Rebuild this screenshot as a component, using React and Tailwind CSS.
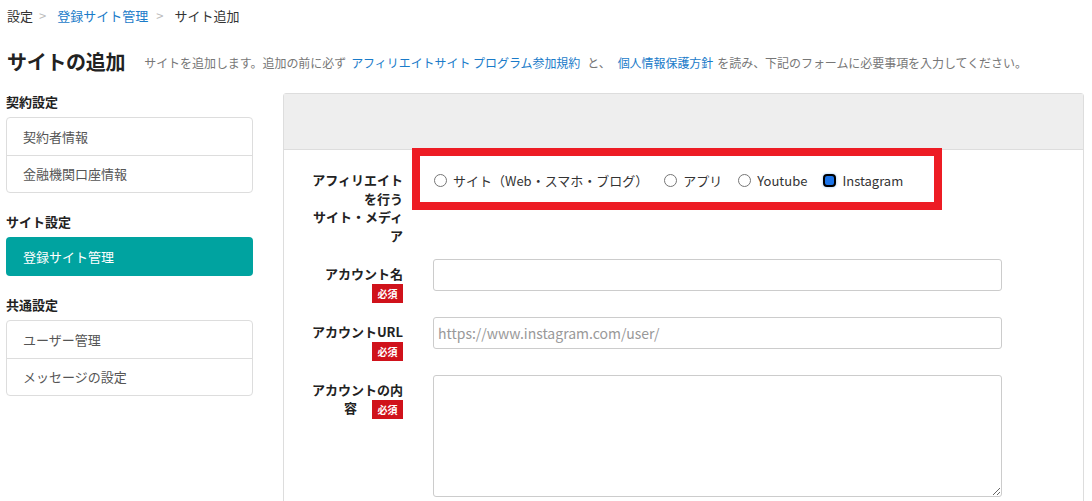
import React from 'react';

const font = { fontFamily: '"Noto Sans CJK JP", "Noto Sans", sans-serif' };

function Badge() {
  return (
    <span className="inline-block w-[31px] h-[19px] bg-[#d0121b] text-white text-[10px] font-bold leading-[19px] text-center align-middle">
      必須
    </span>
  );
}

function Radio({ label, checked }) {
  return (
    <label className="flex items-center gap-[6px]">
      {checked ? (
        <span className="w-[13px] h-[13px] rounded-[4px] border-2 border-black bg-[#1a73e8] shadow-[0_0_3px_#8ec5ff]" />
      ) : (
        <span className="w-[13px] h-[13px] rounded-full border border-[#767676] bg-white" />
      )}
      <span>{label}</span>
    </label>
  );
}

function SideGroup({ title, children }) {
  return (
    <div>
      <div className="text-[13px] font-bold leading-[17px] text-[#222]">{title}</div>
      <div className="mt-[7px]">{children}</div>
    </div>
  );
}

function SideBox({ items }) {
  return (
    <div className="border border-[#ddd] rounded-[4px] bg-white">
      {items.map((t, i) => (
        <div
          key={t}
          className={`h-[37px] flex items-center pl-[16px] text-[13px] text-[#555] ${i > 0 ? 'border-t border-[#ddd]' : ''}`}
        >
          {t}
        </div>
      ))}
    </div>
  );
}

export default function App() {
  return (
    <div className="bg-white min-h-screen pl-[6px] pr-[8px] pt-[6px] text-[#333]" style={font}>
      {/* Breadcrumb */}
      <div className="flex items-center text-[13px] leading-[20px] pl-[1px]">
        <span>設定</span>
        <span className="text-[#bbb] mx-[6px]">&gt;</span>
        <a className="text-[#1a7bc9] ml-[5px]">登録サイト管理</a>
        <span className="text-[#bbb] mx-[8px]">&gt;</span>
        <span className="ml-[3px]">サイト追加</span>
      </div>

      {/* Title */}
      <div className="flex items-center mt-[22px] h-[28px] pl-[1px]">
        <h1 className="text-[20px] font-bold leading-[28px] tracking-[-0.3px] text-[#222]">サイトの追加</h1>
        <p className="ml-[19px] text-[12px] text-[#777] pt-[2px] tracking-[-0.05px]">
          サイトを追加します。追加の前に必ず
          <a className="text-[#1a7bc9] ml-[5px]">アフィリエイトサイト プログラム参加規約</a>
          <span className="ml-[7px]">と、</span>
          <a className="text-[#1a7bc9] ml-[7px]">個人情報保護方針</a>
          <span className="ml-[4px]">を読み、下記のフォームに必要事項を入力してください。</span>
        </p>
      </div>

      <div className="flex mt-[17px] gap-[30px]">
        {/* Sidebar */}
        <aside className="w-[247px] shrink-0 flex flex-col gap-[20px]">
          <SideGroup title="契約設定">
            <SideBox items={['契約者情報', '金融機関口座情報']} />
          </SideGroup>
          <SideGroup title="サイト設定">
            <div className="h-[39px] mt-[1px] rounded-[4px] bg-[#00a3a0] text-white text-[13px] flex items-center pl-[17px]">
              登録サイト管理
            </div>
          </SideGroup>
          <SideGroup title="共通設定">
            <SideBox items={['ユーザー管理', 'メッセージの設定']} />
          </SideGroup>
        </aside>

        {/* Main panel */}
        <main className="flex-1 border border-[#ddd] rounded-t-[3px]">
          <div className="h-[56px] bg-[#eee] border-b border-[#ddd]" />
          <div className="relative pb-[40px] text-[13px]">
            {/* annotation box */}
            <div className="absolute left-[128px] top-[-2px] w-[530px] h-[62px] border-[8px] border-[#ed1c24] pointer-events-none" />

            {/* Row 1 */}
            <div className="flex items-start pt-[21px]">
              <div className="w-[119px] shrink-0 text-right font-bold leading-[18.5px] text-[#222]">
                アフィリエイト<br />を行う<br />サイト・メディ<br />ア
              </div>
              <div className="ml-[30px] pl-[1px] flex items-center gap-[16px] h-[18.5px] text-[#333]">
                <Radio label="サイト（Web・スマホ・ブログ）" />
                <Radio label="アプリ" />
                <Radio label="Youtube" />
                <Radio label="Instagram" checked />
              </div>
            </div>

            {/* Row 2 */}
            <div className="flex items-start mt-[14px]">
              <div className="w-[119px] shrink-0 text-right font-bold leading-[18px] pt-[6px] text-[#222]">
                アカウント名<br />
                <Badge />
              </div>
              <input
                type="text"
                className="ml-[30px] w-[569px] h-[32px] border border-[#ccc] rounded-[3px] px-[4px] text-[14px] outline-none"
              />
            </div>

            {/* Row 3 */}
            <div className="flex items-start mt-[14px]">
              <div className="w-[119px] shrink-0 text-right font-bold leading-[18px] pt-[6px] text-[#222]">
                アカウントURL<br />
                <Badge />
              </div>
              <input
                type="text"
                placeholder="https://www.instagram.com/user/"
                className="ml-[30px] w-[569px] h-[32px] border border-[#ccc] rounded-[3px] px-[4px] text-[14px] outline-none placeholder:text-[#999]"
              />
            </div>

            {/* Row 4 */}
            <div className="flex items-start mt-[14px]">
              <div className="w-[119px] shrink-0 text-right font-bold leading-[18px] pt-[6px] text-[#222]">
                アカウントの内<br />
                容 <span className="ml-[12px]"><Badge /></span>
              </div>
              <textarea className="ml-[30px] w-[569px] h-[122px] border border-[#ccc] rounded-[3px] px-[4px] text-[14px] outline-none" />
            </div>
          </div>
        </main>
      </div>
    </div>
  );
}
